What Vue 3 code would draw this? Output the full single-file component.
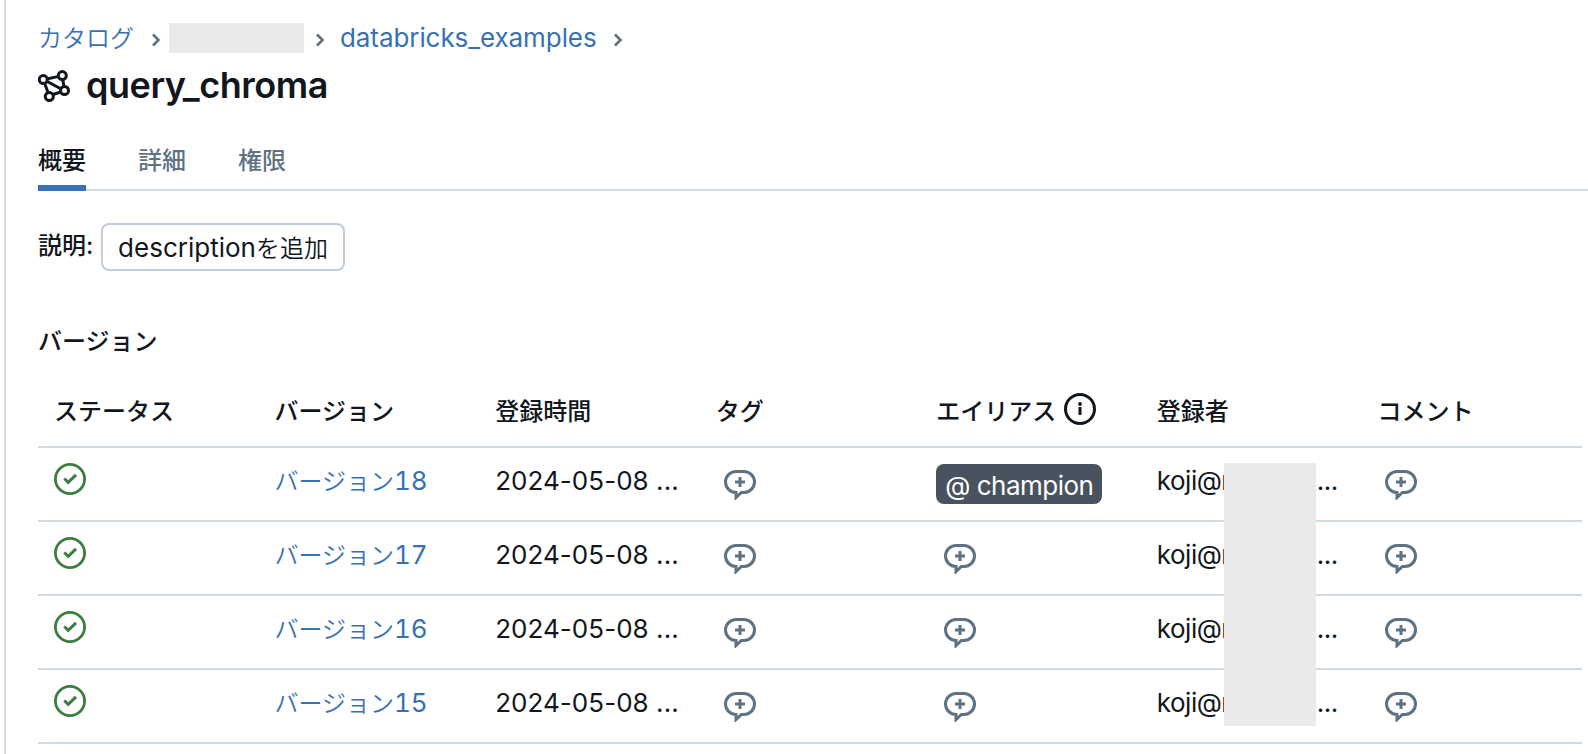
<script setup>
const tabs = ['概要', '詳細', '権限']
const columns = ['ステータス', 'バージョン', '登録時間', 'タグ', 'エイリアス', '登録者', 'コメント']
const versions = [
  { number: 18, time: '2024-05-08 ...', alias: 'champion' },
  { number: 17, time: '2024-05-08 ...', alias: '' },
  { number: 16, time: '2024-05-08 ...', alias: '' },
  { number: 15, time: '2024-05-08 ...', alias: '' },
]
</script>

<template>
  <svg class="defs" width="0" height="0" aria-hidden="true">
    <symbol id="comment" viewBox="0 0 32 30">
      <path d="M12 1.500h8a10.500 10.500 0 0 1 0 21h-2.600L12 27.600V22.500A10.500 10.500 0 0 1 12 1.500Z" fill="none" stroke="currentColor" stroke-width="3" />
      <path d="M16 7v10M11 12h10" fill="none" stroke="currentColor" stroke-width="3" />
    </symbol>
    <symbol id="chevron" viewBox="0 0 10 14">
      <path d="M2 1.500l5.500 5.500-5.500 5.500" fill="none" stroke="currentColor" stroke-width="2.600" />
    </symbol>
  </svg>
  <main class="page">
    <nav class="crumbs">
      <a class="jp">カタログ</a>
      <svg class="chev c1"><use href="#chevron" /></svg>
      <span class="mask"></span>
      <svg class="chev c2"><use href="#chevron" /></svg>
      <a class="schema">databricks_examples</a>
      <svg class="chev c3"><use href="#chevron" /></svg>
    </nav>
    <header class="title">
      <svg width="32" height="32" viewBox="0 0 32 32" fill="none" stroke="currentColor" stroke-width="3">
        <path d="M9.500 8.800L20 6.600M24.800 9.500L25.800 16M22.200 18.500L8.800 11.300M6.500 13L10 22.500M15 24.500L22.600 22" />
        <circle cx="5.300" cy="9.600" r="4" />
        <circle cx="24.300" cy="5.600" r="4" />
        <circle cx="26.500" cy="20.500" r="4" />
        <circle cx="11.300" cy="26.500" r="4" />
      </svg>
      <h1>query_chroma</h1>
    </header>
    <div class="tabs">
      <span v-for="(t, i) in tabs" :key="t" class="tab" :class="{ active: i === 0 }">{{ t }}</span>
    </div>
    <div class="desc">
      <span class="label">説明:</span>
      <button><span class="lat">description</span><span class="jp">を追加</span></button>
    </div>
    <h2>バージョン</h2>
    <section class="table">
      <div class="row head">
        <div v-for="c in columns" :key="c" class="cell">
          <span>{{ c }}</span>
          <svg v-if="c === 'エイリアス'" class="info" width="32" height="32" viewBox="0 0 32 32">
            <circle cx="16" cy="16" r="14.500" fill="none" stroke="currentColor" stroke-width="3" />
            <path d="M14.500 14h3v8h-3z" fill="currentColor" />
            <circle cx="16" cy="11" r="1.900" fill="currentColor" />
          </svg>
        </div>
      </div>
      <div v-for="v in versions" :key="v.number" class="row">
        <div class="cell">
          <svg class="status" width="32" height="32" viewBox="0 0 32 32" fill="none" stroke="currentColor" stroke-width="2.800">
            <circle cx="16" cy="16" r="14.600" />
            <path d="M10.300 15.500L14.200 19.400L22 11.900" stroke-width="3" />
          </svg>
        </div>
        <div class="cell"><a><span class="jp">バージョン</span><span class="num">{{ v.number }}</span></a></div>
        <div class="cell time">{{ v.time }}</div>
        <div class="cell"><svg class="add"><use href="#comment" /></svg></div>
        <div class="cell">
          <span v-if="v.alias" class="alias">@ {{ v.alias }}</span>
          <svg v-else class="add"><use href="#comment" /></svg>
        </div>
        <div class="cell user"><span class="name">koji@n</span><span class="dots">...</span></div>
        <div class="cell"><svg class="add"><use href="#comment" /></svg></div>
      </div>
      <span class="cover"></span>
    </section>
  </main>
</template>

<style>
body { background: #fff; overflow: hidden; }
</style>

<style scoped>
.defs { position: absolute; }
.page {
  box-sizing: border-box;
  height: 754px;
  margin-left: 4px;
  padding: 20px 0 0 32px;
  border-left: 2px solid #d1d9e1;
  overflow: hidden;
  color: #11171c;
  font-family: Inter, "Noto Sans CJK JP", sans-serif;
  font-size: 26px;
  font-weight: 380;
  line-height: 36px;
  letter-spacing: -0.08px;
  white-space: nowrap;
}
a { color: #3871b3; }
.jp { font-size: 24px; font-weight: 350; letter-spacing: 0; }
.crumbs { display: flex; align-items: center; height: 36px; }
.crumbs .jp { padding-top: 1px; }
.chev { width: 10px; height: 14px; color: #5f7281; flex: none; margin-top: 4px; }
.c1 { margin-left: 17px; margin-right: 8px; }
.mask { width: 135px; height: 30px; background: #eaeaea; }
.c2 { margin-left: 11px; margin-right: 15px; }
.schema { width: 255px; }
.c3 { margin-left: 18px; }
.title { display: flex; align-items: center; gap: 16px; height: 60px; }
h1 { margin: -2px 0 0; font-size: 36px; font-weight: 600; line-height: 44px; letter-spacing: -0.45px; }
.tabs {
  display: flex;
  gap: 52px;
  box-sizing: border-box;
  height: 75px;
  padding-top: 26px;
  border-bottom: 2px solid #d1d9e1;
  font-size: 24px;
  font-weight: 500;
  line-height: 38px;
  letter-spacing: 0;
  color: #5f7281;
}
.tab { box-sizing: border-box; height: 49px; }
.active { color: #11171c; border-bottom: 6px solid #3871b3; }
.desc { display: flex; gap: 7px; margin-top: 32px; height: 48px; }
.label { width: 56px; font-size: 24px; font-weight: 500; line-height: 45px; letter-spacing: 0; }
button {
  box-sizing: border-box;
  width: 244px;
  height: 48px;
  padding: 2px 0 0;
  border: 2px solid #c0cdd8;
  border-radius: 8px;
  background: #fff;
  color: inherit;
  font: inherit;
  letter-spacing: 0;
}
h2 { margin: 52px 0 0; font-size: 24px; font-weight: 500; line-height: 38px; letter-spacing: 0; }
.table { position: relative; width: 1544px; margin-top: 13px; }
.row {
  display: grid;
  grid-template-columns: repeat(7, 1fr);
  box-sizing: border-box;
  height: 74px;
  border-bottom: 2px solid #d1d9e1;
}
.cell { display: flex; align-items: flex-start; padding: 15px 0 0 16px; min-width: 0; }
.head .cell { padding-top: 19px; font-size: 24px; font-weight: 500; line-height: 38px; letter-spacing: 0; }
.info { margin: 0 0 0 8px; }
.status { color: #3c7d40; }
.num { font-variant-numeric: tabular-nums; }
.time { letter-spacing: 0.05px; }
.add { width: 32px; height: 30px; margin: 7px 0 0 8px; color: #5f7281; }
.alias {
  box-sizing: border-box;
  width: 166px;
  height: 40px;
  margin-top: 1px;
  padding: 0 9px;
  border-radius: 8px;
  background: #48535f;
  color: #fff;
  line-height: 43px;
  letter-spacing: -0.5px;
}
.user { letter-spacing: -0.5px; }
.name { width: 160px; }
.cover { position: absolute; left: 1186px; top: 89px; width: 92px; height: 263px; background: #eaeaea; }
</style>
